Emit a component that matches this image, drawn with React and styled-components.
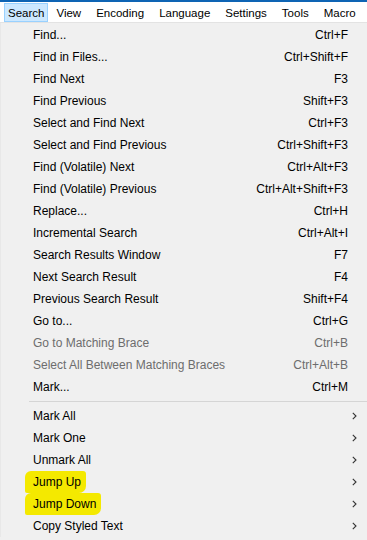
import React from 'react';
import styled, { createGlobalStyle } from 'styled-components';

const Global = createGlobalStyle`
  html, body {
    margin: 0;
    padding: 0;
    background: #f0f0f0;
  }
  body {
    font-family: 'Segoe UI', 'Liberation Sans', Arial, sans-serif;
    font-size: 12px;
    color: #000;
  }
`;

const Page = styled.div`
  width: 367px;
  height: 540px;
  overflow: hidden;
  background: #f0f0f0;
  border-top: 2px solid #0e64b4;
  box-sizing: border-box;
`;

const MenuBar = styled.div`
  display: flex;
  align-items: stretch;
  height: 20px;
  background: #fff;
  border-bottom: 1px solid #e3e3e3;
  padding-left: 4px;
  white-space: nowrap;
`;

const BarItem = styled.div`
  display: flex;
  align-items: center;
  padding: 0 ${p => (p.$first ? '3px' : '6px')};
  margin-right: 1px;
  box-sizing: border-box;
  border: 1px solid ${p => (p.$active ? '#99d1ff' : 'transparent')};
  background: ${p => (p.$active ? '#cce8ff' : 'transparent')};
  margin-top: 1px;
  font-size: 11.5px;
`;

const Dropdown = styled.div`
  padding-top: 1px;
  border-left: 1px solid #e8e8e8;
`;

const Row = styled.div`
  display: flex;
  align-items: center;
  height: 22px;
  padding-left: 32px;
  padding-right: 19px;
  color: ${p => (p.$disabled ? '#6d6d6d' : '#000')};
`;

const Label = styled.span`
  flex: 1;
`;

const Shortcut = styled.span`
  text-align: right;
`;

const Arrow = styled.svg`
  width: 5px;
  height: 8px;
  margin-right: -9px;
`;

const Separator = styled.div`
  height: 7px;
  display: flex;
  align-items: center;
  padding-left: 28px;
  &::after {
    content: '';
    flex: 1;
    height: 1px;
    background: #d5d5d5;
  }
`;

const Marker = styled.span`
  display: inline-block;
  line-height: 12px;
  background: #f4e900;
  margin-left: -8px;
  padding: 5px 5px 5px 8px;
  border-radius: 6px 3px 7px 2px;
`;

const items = [
  ['Find...', 'Ctrl+F'],
  ['Find in Files...', 'Ctrl+Shift+F'],
  ['Find Next', 'F3'],
  ['Find Previous', 'Shift+F3'],
  ['Select and Find Next', 'Ctrl+F3'],
  ['Select and Find Previous', 'Ctrl+Shift+F3'],
  ['Find (Volatile) Next', 'Ctrl+Alt+F3'],
  ['Find (Volatile) Previous', 'Ctrl+Alt+Shift+F3'],
  ['Replace...', 'Ctrl+H'],
  ['Incremental Search', 'Ctrl+Alt+I'],
  ['Search Results Window', 'F7'],
  ['Next Search Result', 'F4'],
  ['Previous Search Result', 'Shift+F4'],
  ['Go to...', 'Ctrl+G'],
  ['Go to Matching Brace', 'Ctrl+B', true],
  ['Select All Between Matching Braces', 'Ctrl+Alt+B', true],
  ['Mark...', 'Ctrl+M'],
];

const subItems = [
  ['Mark All'],
  ['Mark One'],
  ['Unmark All'],
  ['Jump Up', true],
  ['Jump Down', true],
  ['Copy Styled Text'],
];

const Chevron = () => (
  <Arrow viewBox="0 0 5 8">
    <path d="M0.8 0.8 L4 4 L0.8 7.2" fill="none" stroke="#333" strokeWidth="1.1" />
  </Arrow>
);

export default function App() {
  return (
    <Page>
      <Global />
      <MenuBar>
        <BarItem $active $first>Search</BarItem>
        <BarItem>View</BarItem>
        <BarItem>Encoding</BarItem>
        <BarItem>Language</BarItem>
        <BarItem>Settings</BarItem>
        <BarItem>Tools</BarItem>
        <BarItem>Macro</BarItem>
      </MenuBar>
      <Dropdown>
        {items.map(([label, key, disabled]) => (
          <Row key={label} $disabled={disabled}>
            <Label>{label}</Label>
            <Shortcut>{key}</Shortcut>
          </Row>
        ))}
        <Separator />
        {subItems.map(([label, marked]) => (
          <Row key={label}>
            <Label>{marked ? <Marker>{label}</Marker> : label}</Label>
            <Chevron />
          </Row>
        ))}
      </Dropdown>
    </Page>
  );
}
